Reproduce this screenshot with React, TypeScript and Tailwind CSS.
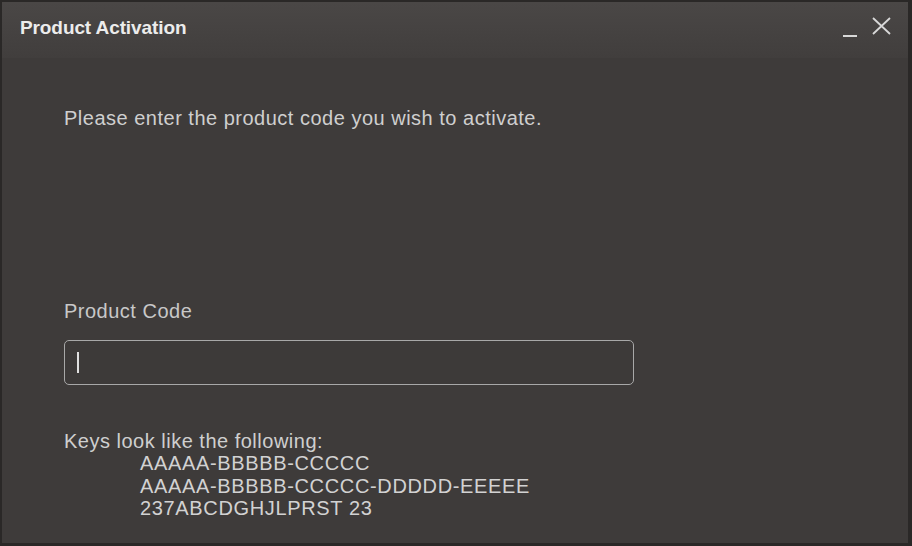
import React from 'react';

export default function App() {
  return (
    <div className="w-[912px] h-[546px] bg-[#2a2827] p-[2px] pr-[4px] pb-[3px] font-['Liberation_Sans',Arial,sans-serif]">
      <div className="h-full flex flex-col bg-[#3e3b3a]">
        <div className="h-[56px] flex items-start justify-between pl-[18px] pr-[16px] pt-[12px] bg-gradient-to-b from-[#4a4746] to-[#413e3d]">
          <h1 className="text-[19px] font-bold text-[#ececec] tracking-[-0.1px]">Product Activation</h1>
          <div className="flex items-start gap-[13px] text-[#d8d8d8] pt-[1px]">
            <svg width="16" height="22" viewBox="0 0 16 22">
              <line x1="1" y1="21" x2="15" y2="21" stroke="currentColor" strokeWidth="2" />
            </svg>
            <svg width="21" height="21" viewBox="0 0 21 21">
              <path d="M2 3 L19 19 M19 3 L2 19" stroke="currentColor" strokeWidth="1.8" />
            </svg>
          </div>
        </div>

        <div className="flex-1 flex flex-col px-[62px] text-[#cfcfcf] text-[20px] tracking-[0.5px]">
          <p className="mt-[45px] tracking-[0.5px]">Please enter the product code you wish to activate.</p>

          <label className="mt-[166px] text-[#c8c8c8] leading-[24px]">Product Code</label>
          <div className="mt-[17px] w-[570px] h-[45px] rounded-[5px] border-[1.5px] border-[#a8a8a8] bg-[#3d3a39] flex items-center px-[12px]">
            <div className="w-[2px] h-[21px] bg-[#e0e0e0]" />
          </div>

          <p className="mt-[45px] leading-[22px]">Keys look like the following:</p>
          <div className="pl-[76px] leading-[22.5px] text-[#d2d2d2] tracking-[0.65px]">
            <div>AAAAA-BBBBB-CCCCC</div>
            <div>AAAAA-BBBBB-CCCCC-DDDDD-EEEEE</div>
            <div>237ABCDGHJLPRST 23</div>
          </div>
        </div>
      </div>
    </div>
  );
}
